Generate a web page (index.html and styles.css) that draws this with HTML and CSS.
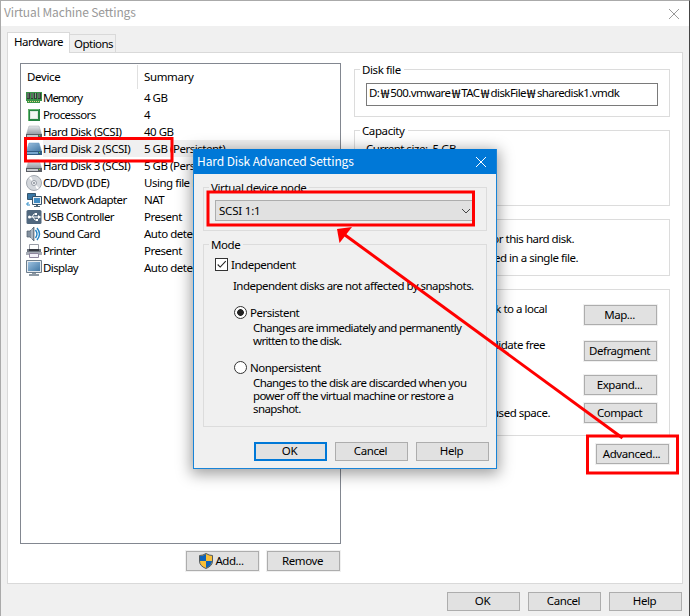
FILE: index.html
```html
<!DOCTYPE html>
<html lang="en">
<head>
<meta charset="utf-8">
<title>Virtual Machine Settings</title>
<link rel="stylesheet" href="styles.css">
</head>
<body>
<svg class="defs" width="0" height="0" aria-hidden="true">
  <defs>
    <linearGradient id="metal" x1="0" y1="0" x2="0" y2="1"><stop offset="0" stop-color="#e4e7eb"/><stop offset="1" stop-color="#969ca5"/></linearGradient>
    <linearGradient id="blue" x1="0" y1="0" x2="1" y2="1"><stop offset="0" stop-color="#9cc0df"/><stop offset="1" stop-color="#4378a5"/></linearGradient>
    <symbol id="disk" viewBox="0 0 16 16"><path d="M3 2h10l2.500 8H.5z" fill="url(#metal)" stroke="#a5aab1" stroke-width=".5"/><path d="M0 10h16v4H0z" fill="#5a5e65"/><path d="M1 11h11v2H1z" fill="#c7cbd0"/><path d="M13 11h1v1h-1z" fill="#6ada35"/></symbol>
  </defs>
</svg>
<main class="window">
  <header class="titlebar">
    <h1>Virtual Machine Settings</h1>
    <svg class="close" viewBox="0 0 12 12"><path d="M1 1l10 10M11 1L1 11"/></svg>
  </header>
  <nav class="tabs"><span class="tab active">Hardware</span><span class="tab">Options</span></nav>
  <section class="panel">
    <div class="left">
      <div class="list">
        <div class="row head"><span>Device</span><span>Summary</span></div>
        <div class="row"><svg viewBox="0 0 16 16"><path d="M0 2h16v9h-2v2H1v-2H0z" fill="#389347"/><path d="M1 3h3v6H1zM5 3h2v6H5zM8 3h3v6H8zM12 3h3v6h-3z" fill="#343b38"/><path d="M2 3v5M6 3v5M9.500 3v5M13 3v5" stroke="#8b9990"/><path d="M2 11.500h12" stroke="#e7d98b" stroke-dasharray="1 1"/></svg><span class="tight">Memory</span><span>4 GB</span></div>
        <div class="row"><svg viewBox="0 0 16 16"><path d="M2 2h12v12H2z" fill="#278344"/><path d="M4 4h8v8H4z" fill="#dce6df"/><path d="M5 5h6v6H5z" fill="#f3f6f4"/><path d="M2.500 14V2.500H13" fill="none" stroke="#64b76f"/></svg><span class="snug">Processors</span><span>4</span></div>
        <div class="row"><svg><use href="#disk"/></svg><span>Hard Disk (SCSI)</span><span>40 GB</span></div>
        <div class="row selected"><svg viewBox="0 0 16 16"><path d="M3 2h10l2.500 8H.5z" fill="url(#blue)" stroke="#6596bf" stroke-width=".5"/><path d="M0 10h16v4H0z" fill="#315d83"/><path d="M1 11h11v2H1z" fill="#78a8cf"/><path d="M13 11h1v1h-1z" fill="#65d34e"/></svg><span>Hard Disk 2 (SCSI)</span><span>5 GB (Persistent)</span></div>
        <div class="row"><svg><use href="#disk"/></svg><span>Hard Disk 3 (SCSI)</span><span>5 GB (Persistent)</span></div>
        <div class="row"><svg viewBox="0 0 16 16"><circle cx="8" cy="8" r="7.500" fill="#d3d7dc" stroke="#a2a8b0"/><path d="M8 8L3 3l2-1.500zM8 8l5 5-2 1.500z" fill="#fff"/><circle cx="8" cy="8" r="2.500" fill="#f5f6f8" stroke="#979da6"/><circle cx="8" cy="8" r="1" fill="#858c97"/></svg><span>CD/DVD (IDE)</span><span>Using file D:</span></div>
        <div class="row"><svg viewBox="0 0 16 16"><path d="M1.500 1.500h8v6h-8z" fill="#3977a5" stroke="#34546d"/><path d="M3 11H1v2h3" fill="none" stroke="#2989c6"/><path d="M6.500 4.500h9v8h-9z" fill="#ecf1f5" stroke="#36526a"/><path d="M8 6h6v5H8z" fill="#428dc4"/><path d="M10 13h2v1h2v1H8v-1h2z" fill="#4f6575"/></svg><span class="snug">Network Adapter</span><span>NAT</span></div>
        <div class="row"><svg viewBox="0 0 16 16"><rect x=".5" y="1" width="15" height="14" rx="1.500" fill="#50677e"/><path d="M3 8h10M6 8l2-3h2M7 8l2 3h2" fill="none" stroke="#fff"/><circle cx="3.500" cy="8" r="1.500" fill="#fff"/><path d="M12 6l3 2-3 2zM9 4h2v2H9zM10 10h2v2h-2z" fill="#fff"/></svg><span class="snug">USB Controller</span><span>Present</span></div>
        <div class="row"><svg viewBox="0 0 16 16"><path d="M1 5h3l4-4v14l-4-4H1z" fill="#82909f" stroke="#4e5d6c" stroke-width=".7"/><path d="M6 3v10" stroke="#d2dae1"/><path d="M9.500 4q3 4 0 8M11 2q5 6 0 12" fill="none" stroke="#2485c5" stroke-width="1.400"/></svg><span class="snug">Sound Card</span><span>Auto detect</span></div>
        <div class="row"><svg viewBox="0 0 16 16"><path d="M3.500 1.500h9v6h-9z" fill="#fff" stroke="#999da7"/><path d="M1 6h14v6H1z" fill="#6e7480"/><path d="M0 9h16v3H0z" fill="#a4aab4"/><path d="M3 6h10v2H3z" fill="#343840"/><path d="M3.500 10.500h9v4h-9z" fill="#f3f1fa" stroke="#8d859d"/></svg><span class="snug">Printer</span><span>Present</span></div>
        <div class="row"><svg viewBox="0 0 16 16"><path d="M.5.500h15v12H.5z" fill="#e4e9ee" stroke="#6c7d8d"/><path d="M2 2h12v9H2z" fill="url(#blue)"/><path d="M6 13h4v1h3v2H3v-2h3z" fill="#8d99a4"/></svg><span class="snug">Display</span><span>Auto detect</span></div>
      </div>
      <div class="actions"><button><svg class="shield" viewBox="0 0 14 16"><path d="M7 .5Q4 2.500.5 2.500V8q0 5 6.500 7.500Q13.500 13 13.500 8V2.500Q10 2.500 7 .5z" fill="#f8bf37"/><path d="M7 1Q4 3 1 3v5h6zM7 8h6q0 4.500-6 7z" fill="#0d62b9"/><path d="M7 .5Q4 2.500.5 2.500V8q0 5 6.500 7.500Q13.500 13 13.500 8V2.500Q10 2.500 7 .5z" fill="none" stroke="#515a61"/></svg>Add...</button><button>Remove</button></div>
    </div>
    <div class="right">
      <section class="group file"><h2>Disk file</h2><div class="input">D:<i>₩</i>500.vmware<i>₩</i>TAC<i>₩</i>diskFile<i>₩</i>sharedisk1.vmdk</div></section>
      <section class="group capacity"><h2>Capacity</h2><p>Current size:&nbsp; 5 GB</p></section>
      <section class="group info"><p>Disk space is not preallocated for this hard disk.</p><p class="single">Hard disk contents are stored in a single file.</p></section>
      <section class="group utilities">
        <div class="util map"><p>Map this virtual machine disk to a local</p><button>Map...</button></div>
        <div class="util defrag"><p>Defragment files and consolidate free</p><button>Defragment</button></div>
        <div class="util expand"><button>Expand...</button></div>
        <div class="util compact"><p>Compact disk to reclaim unused space.</p><button>Compact</button></div>
      </section>
      <button class="advanced">Advanced...</button>
    </div>
  </section>
  <footer><button>OK</button><button>Cancel</button><button>Help</button></footer>
</main>
<section class="dialog">
  <header><h2 class="dtitle">Hard Disk Advanced Settings</h2><svg class="close" viewBox="0 0 12 12"><path d="M1 1l10 10M11 1L1 11"/></svg></header>
  <div class="group node"><h2>Virtual device node</h2><div class="combo"><span>SCSI 1:1</span><svg viewBox="0 0 10 6"><path d="M1 1l4 4 4-4"/></svg></div></div>
  <div class="group mode"><h2>Mode</h2>
    <div class="option"><span class="check"><svg viewBox="0 0 13 13"><path d="M2 6.500L5 9.500l6.500-7"/></svg></span><span class="label">Independent</span></div>
    <p class="hint">Independent disks are not affected by snapshots.</p>
    <div class="option radio-row"><span class="radio on"></span><span>Persistent</span></div>
    <p class="desc one">Changes are immediately and permanently<br>written to the disk.</p>
    <div class="option radio-row second"><span class="radio"></span><span>Nonpersistent</span></div>
    <p class="desc two">Changes to the disk are discarded when you<br>power off the virtual machine or restore a<br>snapshot.</p>
  </div>
  <div class="buttons"><button class="default">OK</button><button>Cancel</button><button>Help</button></div>
</section>
<svg class="notes" viewBox="0 0 690 616"><path class="line" d="M622.500 438L345 235"/><path class="tip" d="M337 229l15-2-12.500 16z"/><path class="box" d="M25.500 138.500H172v22.500H25.500zM208 192h265.500v33H208zM587.500 436h90v37h-90z"/></svg>
</body>
</html>
```

FILE: styles.css
```css
* { box-sizing: border-box; }
body { margin: 0; width: 690px; height: 616px; overflow: hidden; position: relative; background: #f0f0f0; color: #000; font: 11.5px/13px "Noto Sans", sans-serif; letter-spacing: -.48px; }
h1, h2, p { margin: 0; font-size: inherit; font-weight: 400; white-space: nowrap; }
svg { display: block; flex: none; }
.defs { position: absolute; }
.window { width: 690px; height: 616px; border: 1px solid #aaa; border-right-color: #444; border-bottom: 0; }
.titlebar { height: 25px; background: #fff; display: flex; align-items: center; justify-content: space-between; padding: 0 9px 0 3px; color: #999; }
.titlebar h1 { font: 12px/16px "Noto Sans CJK KR", sans-serif; letter-spacing: -.13px; margin-top: -3px; }
.close { width: 12px; height: 12px; fill: none; stroke: #999; }
.tabs { height: 26px; display: flex; align-items: flex-end; padding-left: 6px; }
.tab { height: 18px; width: 46px; border: 1px solid #d9d9d9; border-left: 0; border-bottom: 0; padding: 2px 4px; white-space: nowrap; letter-spacing: -.52px; }
.tab.active { position: relative; z-index: 1; width: 63px; height: 21px; margin-bottom: -1px; border-left: 1px solid #d9d9d9; background: #fff; padding: 2px 6px; }
.panel { width: 676px; height: 532px; margin-left: 6px; border: 1px solid #d9d9d9; background: #fff; display: flex; padding: 10px 0 0 12px; }
.left { width: 321px; }
.list { height: 481px; border: 1px solid #828790; padding-top: 1px; }
.row { height: 17px; display: grid; grid-template-columns: 16px 102px 1fr; padding-left: 5px; align-items: center; white-space: nowrap; }
.row svg { width: 16px; height: 16px; }
.row span:nth-of-type(1) { padding-left: 1px; }
.row .tight { letter-spacing: -1.05px; }
.row .snug { letter-spacing: -.6px; }
.row.head { height: 24px; grid-template-columns: 111px 1fr; padding-left: 5px; letter-spacing: -.35px; }
.head span { height: 24px; line-height: 24px; }
.head span + span { border-left: 1px solid #e0e0e0; padding-left: 6px; }
.selected { background: linear-gradient(#f0f0f0, #f0f0f0) 22px 0 no-repeat; }
.actions { display: flex; justify-content: flex-end; gap: 8px; padding: 7px 1px 0 0; }
button { width: 73px; height: 20px; padding: 0 2px 2px 0; border: 1px solid #adadad; background: #e1e1e1; color: #000; font: inherit; letter-spacing: -.42px; display: flex; align-items: center; justify-content: center; }
.panel button { box-shadow: 0 0 0 1px #f0f0f0; }
.shield { width: 14px; height: 16px; margin: 1px 2px 0 0; }
.right { width: 316px; margin: 6px 0 0 13px; }
.group { border: 1px solid #dcdcdc; }
.group > h2 { width: max-content; background: #fff; margin: -7px 0 0 5px; padding: 0 3px 1px 2px; line-height: 13px; letter-spacing: -.4px; }
.file { height: 48px; }
.input { width: 292px; height: 23px; border: 1px solid #7a7a7a; margin: 6px 0 0 11px; padding: 2px 2px; white-space: nowrap; display: flex; letter-spacing: -.59px; }
.input i { font: 12px/13px "Noto Sans CJK KR", sans-serif; width: 10px; margin: 0 .5px; display: flex; justify-content: center; letter-spacing: 0; transform: scaleX(1.3); }
.capacity { height: 76px; margin-top: 13px; }
.capacity p { margin: 4px 0 0 11px; }
.info { height: 57px; margin-top: 13px; padding-top: 12px; }
.info p { width: 219px; display: flex; justify-content: flex-end; letter-spacing: -.48px; }
.info .single { width: 223px; margin-top: 6px; }
.utilities { height: 147px; margin-top: 13px; padding: 15px 12px 0 0; }
.util { display: flex; height: 20px; justify-content: flex-end; }
.util p { width: 181px; display: flex; justify-content: flex-end; margin-right: 37px; margin-top: -3px; }
.defrag { margin-top: 16px; }
.defrag p { margin-right: 39px; }
.expand { margin-top: 14px; }
.compact { margin-top: 8px; }
.compact p { margin-right: 34px; margin-top: 3px; }
.advanced { margin: 8px 0 0 242px; }
footer { display: flex; justify-content: flex-end; gap: 8px; padding: 8px 7px 0 0; }
footer button, .buttons button { height: 19px; }
.dialog { position: absolute; left: 193px; top: 149px; width: 304px; height: 320px; border: 1px solid #1883d7; background: #f0f0f0; box-shadow: 0 3px 14px 2px rgba(0,0,0,.38); }
.dialog header { height: 25px; margin-top: -1px; background: #0078d7; color: #fff; display: flex; align-items: center; justify-content: space-between; padding: 0 9px 0 3px; }
.dialog .close { stroke: #fff; }
.dtitle { font: 12px/16px "Noto Sans CJK KR", sans-serif; letter-spacing: -.1px; margin-top: -1px; }
.dialog .group { width: 284px; margin-left: 9px; }
.dialog .group > h2 { background: #f0f0f0; }
.node { height: 44px; margin-top: 13px; }
.combo { width: 260px; height: 21px; border: 1px solid #adadad; background: #e1e1e1; margin: 5px 0 0 11px; padding: 0 3px; display: flex; justify-content: space-between; align-items: center; letter-spacing: -.2px; }
.combo svg { width: 10px; height: 6px; fill: none; stroke: #444; }
.mode { height: 183px; margin-top: 13px; }
.option { display: flex; height: 13px; margin: 6px 0 0 11px; align-items: center; gap: 3px; }
.option .label { margin-top: -1px; }
.check { width: 13px; height: 13px; border: 1px solid #333; background: #fff; }
.check svg { width: 11px; height: 11px; fill: none; stroke: #222; stroke-width: 1.3; }
.hint { margin: 8px 0 0 29px; letter-spacing: -.53px; }
.radio-row { margin: 14px 0 0 30px; }
.radio { width: 13px; height: 13px; border: 1px solid #333; border-radius: 50%; background: #fff; flex: none; }
.radio.on { background: radial-gradient(circle, #222 0 3px, #fff 3.7px); }
.desc { margin: 2px 0 0 49px; letter-spacing: -.64px; }
.desc.two { letter-spacing: -.59px; }
.radio-row.second { margin-top: 14px; }
.buttons { display: flex; justify-content: flex-end; gap: 8px; padding: 15px 7px 0 0; }
.buttons .default { border: 2px solid #0078d7; }
.notes { position: absolute; left: 0; top: 0; width: 690px; height: 616px; pointer-events: none; }
.notes .line, .notes .box { fill: none; stroke: #f00; stroke-width: 3; }
.notes .tip { fill: #f00; }
```
